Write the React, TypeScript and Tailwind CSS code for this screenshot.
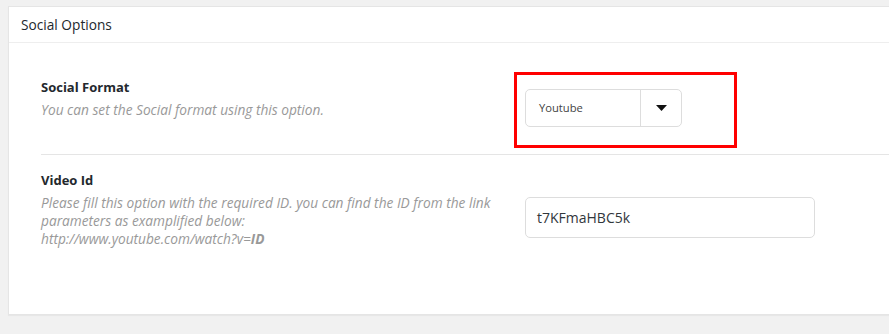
// App.tsx
const App = () => {
  return (
    <div className="h-[334px] w-[889px] overflow-hidden bg-[#f1f1f1] pt-[6px] pl-[8px] font-['Open_Sans',sans-serif]">
      <div className="w-[920px] h-[309px] bg-white border border-[#e5e5e5] shadow-[0_1px_1px_rgba(0,0,0,0.04)]">
        {/* Header */}
        <div className="h-[36px] border-b border-[#eeeeee] pl-[12px] flex items-center">
          <h2 className="text-[13.7px] text-[#23282d] leading-[18px]">Social Options</h2>
        </div>

        <div className="pl-[32px]">
          {/* Social Format row */}
          <div className="flex h-[112px] border-b border-[#e5e5e5] pt-[35px]">
            <div className="w-[484px]">
              <h3 className="text-[13px] font-bold text-[#23282d] leading-[18px]">Social Format</h3>
              <p className="mt-[5px] text-[13.7px] italic text-[#999999] leading-[18px]">
                You can set the Social format using this option.
              </p>
            </div>
            <div className="relative mt-[11px]">
              <div className="flex h-[38px] w-[157px] rounded-[5px] border border-[#dddddd]">
                <div className="flex flex-1 items-center pl-[13px] text-[11.2px] text-[#444444]">Youtube</div>
                <div className="flex w-[41px] items-center justify-center border-l border-[#dddddd]">
                  <svg width="11" height="6" viewBox="0 0 11 6">
                    <path d="M0 0 L11 0 L5.5 6 Z" fill="#111111" />
                  </svg>
                </div>
              </div>
              {/* annotation box */}
              <div className="absolute left-[-11px] top-[-17px] h-[76px] w-[223px] border-[3px] border-[#ff0000]" />
            </div>
          </div>

          {/* Video Id row */}
          <div className="flex pt-[16px]">
            <div className="w-[484px]">
              <h3 className="text-[13px] font-bold text-[#23282d] leading-[18px]">Video Id</h3>
              <p className="mt-[5px] w-[462px] text-[13.7px] italic text-[#999999] leading-[18px]">
                Please fill this option with the required ID. you can find the ID from the link parameters as examplified below:
                <br />
                http://www.youtube.com/watch?v=<b>ID</b>
              </p>
            </div>
            <div className="mt-[26px]">
              <div className="flex h-[41px] w-[290px] items-center rounded-[5px] border border-[#dddddd] pl-[11px] text-[14px] text-[#32373c]">
                t7KFmaHBC5k
              </div>
            </div>
          </div>
        </div>
      </div>
    </div>
  );
};

export default App;
